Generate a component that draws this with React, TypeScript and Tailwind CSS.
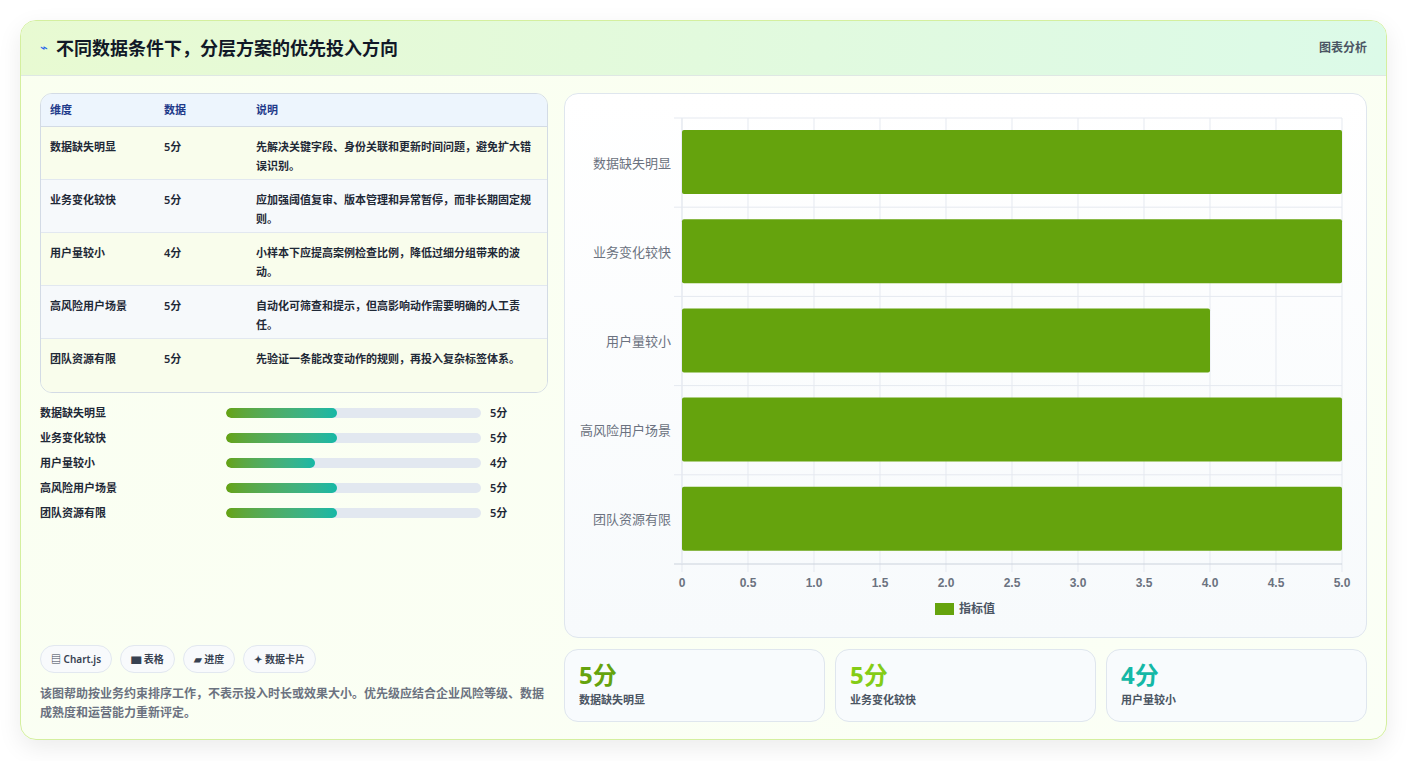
import React from "react";

const rows = [
  ["数据缺失明显", "5分", "先解决关键字段、身份关联和更新时间问题，避免扩大错误识别。"],
  ["业务变化较快", "5分", "应加强阈值复审、版本管理和异常暂停，而非长期固定规则。"],
  ["用户量较小", "4分", "小样本下应提高案例检查比例，降低过细分组带来的波动。"],
  ["高风险用户场景", "5分", "自动化可筛查和提示，但高影响动作需要明确的人工责任。"],
  ["团队资源有限", "5分", "先验证一条能改变动作的规则，再投入复杂标签体系。"],
];
const vals = [5, 5, 4, 5, 5];

function Chart() {
  const x0 = 117, x1 = 777, y0 = 24, y1 = 470;
  const bh = (y1 - y0) / 5;
  const sx = (v: number) => x0 + ((x1 - x0) * v) / 5;
  const ticks = Array.from({ length: 11 }, (_, i) => i * 0.5);
  return (
    <svg width="801" height="544" viewBox="0 0 801 544" className="block">
      {ticks.map((t) => (
        <line key={t} x1={sx(t)} x2={sx(t)} y1={y0} y2={y1 + 8} stroke="#e5e9f0" strokeWidth="1" />
      ))}
      {Array.from({ length: 6 }, (_, i) => (
        <line key={i} x1={x0 - 8} x2={x1} y1={y0 + i * bh} y2={y0 + i * bh} stroke={i === 5 ? "#cbd2dc" : "#e5e9f0"} strokeWidth="1" />
      ))}
      <line x1={x0} x2={x0} y1={y0} y2={y1} stroke="#e5e9f0" />
      {vals.map((v, i) => (
        <g key={i}>
          <rect x={x0} y={y0 + i * bh + 12} width={sx(v) - x0} height={64} rx="2" fill="#65a30d" />
          <text x={x0 - 11} y={y0 + i * bh + bh / 2 + 5} textAnchor="end" fontSize="13" fill="#6b7280" fontFamily="'Noto Sans CJK SC', sans-serif">{rows[i][0]}</text>
        </g>
      ))}
      {ticks.map((t) => (
        <text key={t} x={sx(t)} y={493} textAnchor="middle" fontSize="12" fontWeight="600" fill="#6b7280" fontFamily="'Liberation Sans', sans-serif">{t === 0 ? "0" : t.toFixed(1)}</text>
      ))}
      <rect x="370" y="509" width="19" height="12" fill="#65a30d" />
      <text x="394" y="519" fontSize="12" fontWeight="600" fill="#4b5563" fontFamily="'Noto Sans CJK SC', sans-serif">指标值</text>
    </svg>
  );
}

export default function App() {
  return (
    <div className="w-[1408px] h-[761px] bg-white pt-[20px] pl-[20px]" style={{ fontFamily: "'Noto Sans', 'Noto Sans CJK SC', sans-serif" }}>
      <div className="w-[1367px] h-[720px] rounded-[16px] border border-[#d4ef9f] bg-gradient-to-br from-[#fafff0] to-[#fbfff6] overflow-hidden shadow-[0_8px_24px_rgba(0,0,0,0.08)] flex flex-col">
        <div className="h-[55px] shrink-0 flex items-center justify-between px-[19px] bg-gradient-to-r from-[#e8fad2] to-[#dcfae8] border-b border-[#dfe8e4]">
          <div className="flex items-center gap-[8px]">
            <span className="text-[#2563eb] text-[13px]">⌁</span>
            <span className="text-[18px] font-bold text-[#111827]">不同数据条件下，分层方案的优先投入方向</span>
          </div>
          <span className="text-[12px] font-semibold text-[#4b5563]">图表分析</span>
        </div>
        <div className="flex-1 flex gap-[16px] px-[19px] pt-[17px] pb-[18px]">
          <div className="w-[512px] flex flex-col">
            <div className="rounded-[12px] border border-[#d3dbe5] overflow-hidden text-[11px] font-semibold text-[#1f2937]">
              <div className="flex h-[33px] items-center bg-[#edf5fd] border-b border-[#d3dbe5] text-[#1e3a8a]">
                <div className="w-[123px] pl-[9px]">维度</div>
                <div className="w-[92px]">数据</div>
                <div className="flex-1">说明</div>
              </div>
              {rows.map((r, i) => (
                <div key={i} className={`flex h-[53px] pt-[10px] leading-[19px] ${i < 4 ? "border-b border-[#e2e8f0]" : ""} ${i % 2 === 0 ? "bg-[#f9fdec]" : "bg-[#f6f9fb]"}`}>
                  <div className="w-[123px] pl-[9px]">{r[0]}</div>
                  <div className="w-[92px]">{r[1]}</div>
                  <div className="flex-1 pr-[8px]">{r[2]}</div>
                </div>
              ))}
            </div>
            <div className="mt-[11px] flex flex-col gap-[7px] text-[11px] font-semibold text-[#1f2937]">
              {rows.map((r, i) => (
                <div key={i} className="flex items-center h-[18px]">
                  <div className="w-[186px]">{r[0]}</div>
                  <div className="w-[255px] h-[10px] rounded-full bg-[#e2e8f0] overflow-hidden">
                    <div className="h-full rounded-full bg-gradient-to-r from-[#65a30d] to-[#14b8a6]" style={{ width: vals[i] === 5 ? "43.5%" : "35%" }} />
                  </div>
                  <div className="ml-[9px]">{r[1]}</div>
                </div>
              ))}
            </div>
            <div className="flex-1" />
            <div className="flex gap-[8px] text-[10px] font-semibold text-[#374151]">
              {["▤ Chart.js", "▆ 表格", "▰ 进度", "✦ 数据卡片"].map((p) => (
                <span key={p} className="h-[28px] px-[10px] flex items-center rounded-full border border-[#e2e8f0] bg-[#f8fafc]">{p}</span>
              ))}
            </div>
            <p className="mt-[11px] text-[12px] leading-[19px] font-semibold text-[#6b7280]">该图帮助按业务约束排序工作，不表示投入时长或效果大小。优先级应结合企业风险等级、数据成熟度和运营能力重新评定。</p>
          </div>
          <div className="flex-1 flex flex-col gap-[11px]">
            <div className="h-[545px] rounded-[14px] border border-[#dfe6ee] bg-gradient-to-b from-white to-[#f7fafc] overflow-hidden">
              <Chart />
            </div>
            <div className="grid grid-cols-3 gap-[10px]">
              {[["5分", "数据缺失明显", "text-[#65a30d]"], ["5分", "业务变化较快", "text-[#84cc16]"], ["4分", "用户量较小", "text-[#14b8a6]"]].map(([v, l, c]) => (
                <div key={l} className="h-[73px] rounded-[14px] border border-[#dfe6ee] bg-[#f8fbfd] px-[14px] pt-[10px]">
                  <div className={`text-[24px] font-bold leading-[30px] ${c}`}>{v}</div>
                  <div className="text-[11px] font-semibold text-[#4b5563] mt-[2px]">{l}</div>
                </div>
              ))}
            </div>
          </div>
        </div>
      </div>
    </div>
  );
}
